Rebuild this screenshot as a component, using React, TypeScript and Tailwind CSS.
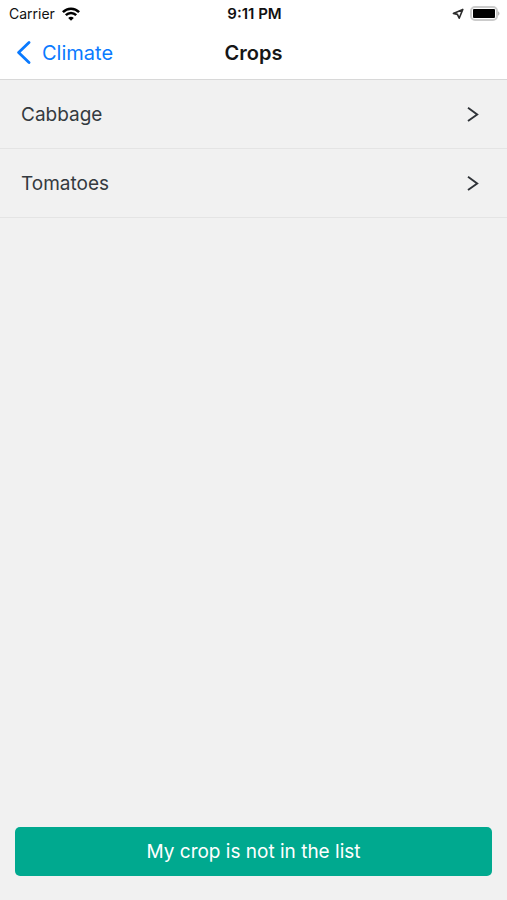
const crops = ["Cabbage", "Tomatoes"]

function StatusBar() {
  return (
    <div className="h-7 pl-[9px] pr-[7px] pb-px grid grid-cols-3 items-center text-[#111111]">
      <div className="flex items-center gap-[7px]">
        <span className="text-[14px] leading-5">Carrier</span>
        <svg width="18" height="14" viewBox="0 0 18 14" fill="none" stroke="black" strokeWidth="2.5" aria-hidden="true">
          <path d="M0.9 5.2C5.4 0.6 12.6 0.6 17.1 5.2" />
          <path d="M3.8 8.1C6.8 5.2 11.2 5.2 14.2 8.1" />
          <path d="M9 13.8L6.2 10.9C7.8 9.4 10.2 9.4 11.8 10.9Z" fill="black" stroke="none" />
        </svg>
      </div>
      <p className="text-[15px] leading-5 font-semibold text-center">9:11 PM</p>
      <div className="flex items-center justify-end gap-[6px]">
        <svg width="12" height="12" viewBox="0 0 12 12" fill="none" stroke="#2c2c2c" strokeWidth="1.6" strokeLinejoin="round" aria-hidden="true">
          <path d="M10.8 1.4L1.4 5.4L5.4 6.4L7.2 10.2Z" />
        </svg>
        <svg width="30" height="15" viewBox="0 0 30 15" aria-hidden="true">
          <rect x="1" y="1" width="26" height="13" rx="4" fill="white" stroke="#cbcbcb" strokeWidth="2" />
          <rect x="3" y="3" width="22" height="9" rx="1" fill="black" />
          <path d="M28.2 5.2C29.9 6.2 29.9 8.8 28.2 9.8Z" fill="#a8a8a8" />
        </svg>
      </div>
    </div>
  )
}

function Header() {
  return (
    <header className="bg-white border-b border-[#d8d8d8]">
      <StatusBar />
      <div className="h-[51px] px-4 pb-[2px] grid grid-cols-3 items-center">
        <a href="#climate" className="flex items-center gap-[10px] text-[#0a7aff] text-[20px] leading-7">
          <svg width="16" height="24" viewBox="0 0 16 24" fill="none" stroke="currentColor" strokeWidth="2.8" strokeLinecap="round" strokeLinejoin="round" aria-hidden="true">
            <path d="M13 1.5L2.6 11.5L13 21.5" />
          </svg>
          Climate
        </a>
        <h1 className="text-[20px] leading-7 font-semibold text-center text-[#161616]">Crops</h1>
      </div>
    </header>
  )
}

export default function App() {
  return (
    <div className="min-h-screen flex flex-col bg-[#f1f1f1] font-['Inter','Liberation_Sans',sans-serif]">
      <Header />
      <main className="grow flex flex-col">
        <ul>
          {crops.map((crop) => (
            <li key={crop} className="border-b border-[#e4e4e4]">
              <button className="w-full h-[68px] pl-[21px] pr-7 pt-px flex items-center justify-between text-left">
                <span className="text-[19px] leading-7 text-[#343a40]">{crop}</span>
                <svg width="12" height="16" viewBox="0 0 12 16" fill="none" stroke="#2f3338" strokeWidth="1.9" aria-hidden="true">
                  <path d="M1 0.8L10.2 7.4L1 14" />
                </svg>
              </button>
            </li>
          ))}
        </ul>
      </main>
      <footer className="px-[15px] pb-6">
        <button className="w-full h-[49px] rounded-[5px] bg-[#00a98f] text-white text-[19px] leading-7">
          My crop is not in the list
        </button>
      </footer>
    </div>
  )
}
